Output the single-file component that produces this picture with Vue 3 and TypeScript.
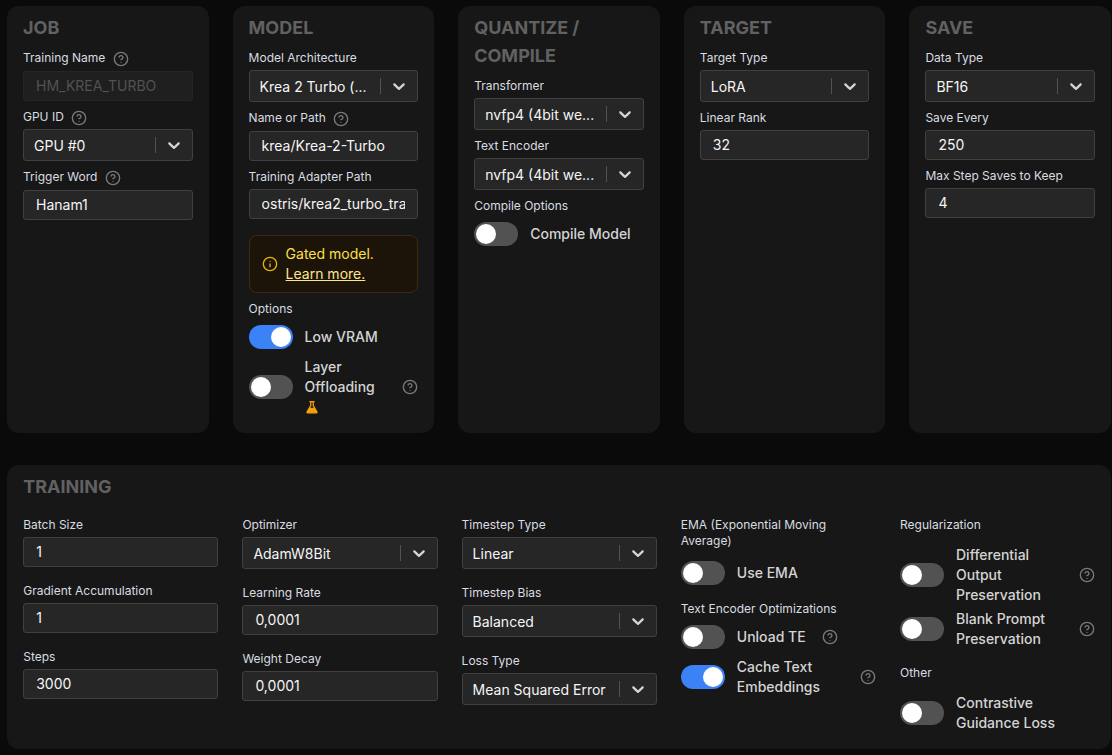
<script setup lang="ts">
const chevron =
  'M4.516 7.548c0.436-0.446 1.043-0.481 1.576 0l3.908 3.747 3.908-3.747c0.533-0.481 1.141-0.446 1.576 0 0.436 0.445 0.408 1.197 0 1.615-0.406 0.418-4.695 4.502-4.695 4.502-0.217 0.223-0.502 0.335-0.789 0.335s-0.572-0.112-0.79-0.335c0 0-4.287-4.084-4.695-4.502s-0.436-1.17 0-1.615z'
</script>

<template>
  <div class="page">
    <svg class="sprite" aria-hidden="true">
      <defs>
        <symbol id="q" viewBox="0 0 24 24">
          <circle cx="12" cy="12" r="10" />
          <path d="M9.09 9a3 3 0 0 1 5.83 1c0 2-3 3-3 3" />
          <path d="M12 17h.01" />
        </symbol>
        <symbol id="chev" viewBox="0 0 20 20">
          <path :d="chevron" class="chev-path" />
        </symbol>
      </defs>
    </svg>

    <div class="top">
      <section class="card">
        <h2>JOB</h2>
        <label class="lab lab-help">Training Name <svg class="help"><use href="#q" /></svg></label>
        <input class="inp off" value="HM_KREA_TURBO" disabled />
        <label class="lab lab-help mt">GPU ID <svg class="help"><use href="#q" /></svg></label>
        <div class="sel"><span class="val">GPU #0</span><i class="sep"></i><svg class="chev"><use href="#chev" /></svg></div>
        <label class="lab lab-help mt">Trigger Word <svg class="help"><use href="#q" /></svg></label>
        <input class="inp" value="Hanam1" />
      </section>

      <section class="card">
        <h2>MODEL</h2>
        <label class="lab">Model Architecture</label>
        <div class="sel"><span class="val">Krea 2 Turbo (...</span><i class="sep"></i><svg class="chev"><use href="#chev" /></svg></div>
        <label class="lab lab-help mt">Name or Path <svg class="help"><use href="#q" /></svg></label>
        <input class="inp" value="krea/Krea-2-Turbo" />
        <label class="lab mt">Training Adapter Path</label>
        <input class="inp" value="ostris/krea2_turbo_training_adapter" />
        <div class="gate">
          <svg class="info" viewBox="0 0 24 24"><circle cx="12" cy="12" r="10" /><path d="M12 16v-4" /><path d="M12 8h.01" /></svg>
          <div>Gated model.<br /><a>Learn more.</a></div>
        </div>
        <label class="lab mt">Options</label>
        <div class="tog first">
          <span class="sw on"><b></b></span><span class="tl">Low VRAM</span>
        </div>
        <div class="tog">
          <span class="sw"><b></b></span>
          <span class="tl">Layer Offloading
            <svg class="flask" viewBox="0 0 14 14"><path d="M4.4 1h5.2v1.3H8.9v3.2l3.6 6c.5.9-.1 1.9-1 1.9H2.5c-.9 0-1.5-1-1-1.9l3.6-6V2.3h-.7z M6.4 2.3v3.4L5.2 7.8h3.6L7.6 5.7V2.3z" fill-rule="evenodd" /></svg>
          </span>
          <svg class="help end"><use href="#q" /></svg>
        </div>
      </section>

      <section class="card">
        <h2>QUANTIZE / COMPILE</h2>
        <label class="lab">Transformer</label>
        <div class="sel"><span class="val">nvfp4 (4bit we...</span><i class="sep"></i><svg class="chev"><use href="#chev" /></svg></div>
        <label class="lab mt">Text Encoder</label>
        <div class="sel"><span class="val">nvfp4 (4bit we...</span><i class="sep"></i><svg class="chev"><use href="#chev" /></svg></div>
        <label class="lab mt">Compile Options</label>
        <div class="tog first">
          <span class="sw"><b></b></span><span class="tl">Compile Model</span>
        </div>
      </section>

      <section class="card">
        <h2>TARGET</h2>
        <label class="lab">Target Type</label>
        <div class="sel"><span class="val">LoRA</span><i class="sep"></i><svg class="chev"><use href="#chev" /></svg></div>
        <label class="lab mt">Linear Rank</label>
        <input class="inp up" value="32" />
      </section>

      <section class="card">
        <h2>SAVE</h2>
        <label class="lab">Data Type</label>
        <div class="sel"><span class="val">BF16</span><i class="sep"></i><svg class="chev"><use href="#chev" /></svg></div>
        <label class="lab mt">Save Every</label>
        <input class="inp up" value="250" />
        <label class="lab mt">Max Step Saves to Keep</label>
        <input class="inp up" value="4" />
      </section>
    </div>

    <section class="card training">
      <h2>TRAINING</h2>
      <div class="cols">
        <div class="col">
          <label class="lab">Batch Size</label>
          <input class="inp" value="1" />
          <label class="lab mt16">Gradient Accumulation</label>
          <input class="inp" value="1" />
          <label class="lab mt16">Steps</label>
          <input class="inp" value="3000" />
        </div>
        <div class="col">
          <label class="lab">Optimizer</label>
          <div class="sel"><span class="val">AdamW8Bit</span><i class="sep"></i><svg class="chev"><use href="#chev" /></svg></div>
          <label class="lab mt16">Learning Rate</label>
          <input class="inp" value="0,0001" />
          <label class="lab mt16">Weight Decay</label>
          <input class="inp" value="0,0001" />
        </div>
        <div class="col">
          <label class="lab">Timestep Type</label>
          <div class="sel"><span class="val">Linear</span><i class="sep"></i><svg class="chev"><use href="#chev" /></svg></div>
          <label class="lab mt16">Timestep Bias</label>
          <div class="sel"><span class="val">Balanced</span><i class="sep"></i><svg class="chev"><use href="#chev" /></svg></div>
          <label class="lab mt16">Loss Type</label>
          <div class="sel"><span class="val">Mean Squared Error</span><i class="sep"></i><svg class="chev"><use href="#chev" /></svg></div>
        </div>
        <div class="col">
          <label class="lab auto">EMA (Exponential Moving Average)</label>
          <div class="tog wide">
            <span class="sw"><b></b></span><span class="tl">Use EMA</span>
          </div>
          <label class="lab mt16">Text Encoder Optimizations</label>
          <div class="tog first">
            <span class="sw"><b></b></span><span class="tl">Unload TE</span><svg class="help end"><use href="#q" /></svg>
          </div>
          <div class="tog">
            <span class="sw on"><b></b></span><span class="tl">Cache Text Embeddings</span><svg class="help end"><use href="#q" /></svg>
          </div>
        </div>
        <div class="col">
          <label class="lab">Regularization</label>
          <div class="tog wide">
            <span class="sw"><b></b></span><span class="tl">Differential Output Preservation</span><svg class="help end"><use href="#q" /></svg>
          </div>
          <div class="tog first">
            <span class="sw"><b></b></span><span class="tl">Blank Prompt Preservation</span><svg class="help end"><use href="#q" /></svg>
          </div>
          <label class="lab mt16">Other</label>
          <div class="tog wide">
            <span class="sw"><b></b></span><span class="tl">Contrastive Guidance Loss</span>
          </div>
        </div>
      </div>
    </section>
  </div>
</template>

<style>
html,
body {
  margin: 0;
  height: 100%;
  overflow: hidden;
  background: #0a0a0a;
}
</style>

<style scoped>
.page {
  box-sizing: border-box;
  height: 755px;
  padding: 6px 1px 0 7px;
  font-family: Inter, 'Liberation Sans', sans-serif;
  color: #d4d4d4;
  background: #0a0a0a;
}
.sprite {
  position: absolute;
  width: 0;
  height: 0;
}
.top {
  display: grid;
  grid-template-columns: repeat(5, minmax(0, 1fr));
  gap: 24px;
}
.card {
  display: flex;
  flex-direction: column;
  background: #171717;
  border-radius: 12px;
  padding: 8px 16px 16px;
}
h2 {
  margin: 0 0 8px;
  font-size: 18px;
  line-height: 28px;
  font-weight: 700;
  color: #616161;
}
.training h2 {
  margin-bottom: 16px;
}
.lab {
  display: block;
  height: 16px;
  margin-bottom: 4px;
  font-size: 12px;
  line-height: 16px;
  font-weight: 400;
  color: #d9dce0;
}
.lab.auto {
  height: auto;
}
.lab-help {
  height: 20.5px;
  margin-bottom: 0;
  white-space: nowrap;
}
.help {
  width: 16px;
  height: 16px;
  vertical-align: -5px;
  margin-left: 4px;
  fill: none;
  stroke: #7a7a7a;
  stroke-width: 2;
  stroke-linecap: round;
  stroke-linejoin: round;
}
.mt {
  margin-top: 8px;
}
.mt16 {
  margin-top: 16px;
}
.inp {
  display: block;
  box-sizing: border-box;
  width: 100%;
  height: 30px;
  padding: 0 12px;
  font: 400 14px/20px Inter, 'Liberation Sans', sans-serif;
  color: #f5f5f5;
  background: #262626;
  border: 1px solid #404040;
  border-radius: 3px;
  outline: none;
}
.inp.up {
  padding-bottom: 2px;
}
.inp.off {
  color: #525252;
  background: #1f1f1f;
  border-color: #262626;
}
.sel {
  display: flex;
  align-items: center;
  box-sizing: border-box;
  height: 32px;
  padding-left: 10px;
  background: #262626;
  border: 1px solid #404040;
  border-radius: 3px;
  font-size: 14px;
  font-weight: 400;
  color: #f5f5f5;
}
.cols .sel {
  padding-top: 1px;
}
.val {
  flex: 1;
  min-width: 0;
  white-space: nowrap;
  overflow: hidden;
}
.sep {
  width: 1px;
  height: 16px;
  background: #525252;
}
.chev {
  width: 20px;
  height: 20px;
  margin: 0 8px;
  flex: none;
}
.chev-path {
  fill: #d4d4d4;
}
.gate {
  display: flex;
  align-items: center;
  gap: 8px;
  box-sizing: border-box;
  height: 58px;
  margin-top: 16px;
  padding: 0 12px;
  background: #1c1409;
  border: 1px solid #3b2a10;
  border-radius: 8px;
  font-size: 14px;
  line-height: 20px;
  font-weight: 400;
  color: #fde047;
}
.gate a {
  color: #fde68a;
  text-decoration: underline;
}
.info {
  flex: none;
  width: 16px;
  height: 16px;
  fill: none;
  stroke: #eab308;
  stroke-width: 2;
  stroke-linecap: round;
  stroke-linejoin: round;
}
.tog {
  display: flex;
  align-items: center;
  margin-top: 8px;
}
.tog.first {
  margin-top: 4px;
}
.sw {
  flex: none;
  position: relative;
  width: 44px;
  height: 24px;
  border-radius: 12px;
  background: #525252;
  margin-right: 12px;
}
.sw b {
  position: absolute;
  top: 2px;
  left: 2px;
  width: 20px;
  height: 20px;
  border-radius: 50%;
  background: #fff;
}
.sw.on {
  background: #3b82f6;
}
.sw.on b {
  left: 22px;
}
.tl {
  min-width: 0;
  font-size: 14px;
  line-height: 20px;
  font-weight: 500;
  color: #d4d4d4;
}
.help.end {
  flex: none;
  margin-left: 16px;
}
.flask {
  display: inline-block;
  width: 14px;
  height: 14px;
  vertical-align: -2px;
  fill: #f59e0b;
}
.training {
  margin-top: 32px;
  height: 284px;
  box-sizing: border-box;
  padding-left: 16.2px;
  padding-right: 15.8px;
}
.cols {
  display: grid;
  grid-template-columns: repeat(5, minmax(0, 1fr));
  gap: 24px;
}
.col {
  display: flex;
  flex-direction: column;
  min-width: 0;
}
</style>
